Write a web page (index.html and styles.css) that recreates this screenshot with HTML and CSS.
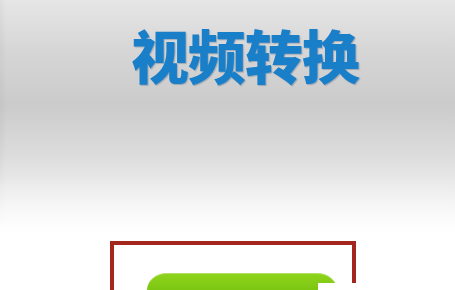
FILE: index.html
```html
<!DOCTYPE html>
<html lang="zh">
<head>
<meta charset="utf-8">
<link rel="stylesheet" href="styles.css">
</head>
<body>
<div class="page">
  <h1 class="title">视频转换</h1>
  <div class="frame">
    <div class="pill"></div>
  </div>
  <div class="cover"></div>
</div>
</body>
</html>
```
FILE: styles.css
```css
html, body {
  margin: 0;
  padding: 0;
}
body {
  width: 455px;
  height: 290px;
  overflow: hidden;
}
.page {
  position: relative;
  width: 455px;
  height: 290px;
  overflow: hidden;
  background: linear-gradient(to bottom, #e6e6e6 0px, #d6d6d6 50px, #cbcbcb 105px, #dedede 160px, #f6f6f6 205px, #ffffff 232px, #ffffff 290px);
  display: flex;
  flex-direction: column;
  align-items: flex-start;
}
.page::before {
  content: "";
  position: absolute;
  left: 0;
  top: 0;
  width: 6px;
  height: 230px;
  background: linear-gradient(to right, rgba(0,0,0,0.03), rgba(0,0,0,0));
  -webkit-mask-image: linear-gradient(to bottom, #000 60%, transparent);
  mask-image: linear-gradient(to bottom, #000 60%, transparent);
}
.title {
  margin: 0;
  padding: 18px 0 0 131px;
  font-family: "Noto Sans CJK SC", sans-serif;
  font-weight: 900;
  font-size: 58px;
  line-height: 72px;
  letter-spacing: -1px;
  color: #1a7fc9;
  text-shadow: 1px 1px 1px rgba(0, 40, 90, 0.25);
}
.frame {
  margin: 151px 0 0 110px;
  width: 205px;
  height: 17px;
  border: 4px solid #a4271f;
  border-bottom: none;
  padding-top: 28px;
  padding-left: 33px;
}
.pill {
  width: 190px;
  height: 17px;
  border-radius: 26px 26px 0 0 / 22px 22px 0 0;
  background: linear-gradient(to bottom, #8fd41c, #7cc612);
  box-shadow: inset 0 1px 0 rgba(255,255,255,0.3);
}
.cover {
  position: absolute;
  left: 318px;
  top: 283px;
  width: 137px;
  height: 7px;
  background: #ffffff;
}
```
